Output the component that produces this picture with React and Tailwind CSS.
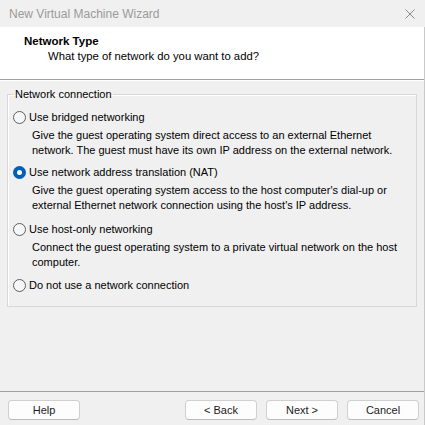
import React, { useState } from 'react'

const options = [
  {
    id: 'bridged',
    label: 'Use bridged networking',
    desc: ['Give the guest operating system direct access to an external Ethernet', 'network. The guest must have its own IP address on the external network.'],
    mt: 'mt-[8px]',
  },
  {
    id: 'nat',
    label: 'Use network address translation (NAT)',
    desc: ["Give the guest operating system access to the host computer's dial-up or", "external Ethernet network connection using the host's IP address."],
    mt: 'mt-[8px]',
  },
  {
    id: 'host',
    label: 'Use host-only networking',
    desc: ['Connect the guest operating system to a private virtual network on the host', 'computer.'],
    mt: 'mt-[10px]',
  },
  {
    id: 'none',
    label: 'Do not use a network connection',
    desc: [],
    mt: 'mt-[9px]',
  },
]

function Radio({ checked }) {
  if (checked) {
    return (
      <span className="w-[13px] h-[13px] rounded-full bg-[#005fb8] flex items-center justify-center shrink-0">
        <span className="w-[5px] h-[5px] rounded-full bg-white" />
      </span>
    )
  }
  return <span className="w-[13px] h-[13px] rounded-full border border-[#5f5f5f] bg-[#f7f7f7] shrink-0" />
}

function Button({ children }) {
  return (
    <button className="w-[72px] h-[20px] rounded-[4px] border border-[#d0d0d0] border-b-[#bcbcbc] bg-[#fdfdfd] text-[11px] leading-[18px] text-[#1b1b1b]">
      {children}
    </button>
  )
}

export default function App() {
  const [sel, setSel] = useState('nat')

  return (
    <div className="w-[425px] h-[425px] bg-[#f0f0f0] flex flex-col overflow-hidden text-black" style={{ fontFamily: '"Liberation Sans", Arial, sans-serif' }}>
      {/* title bar */}
      <div className="h-[27px] shrink-0 flex items-center justify-between pl-[9px] pr-[10px] bg-[#f0f0f0]">
        <span className="text-[12px] text-[#9a9a9a]">New Virtual Machine Wizard</span>
        <svg width="10" height="10" viewBox="0 0 10 10" className="text-[#8a8a8a]">
          <path d="M0.5 0.5 L9.5 9.5 M9.5 0.5 L0.5 9.5" stroke="currentColor" strokeWidth="1" fill="none" />
        </svg>
      </div>

      <div className="flex-1 flex flex-col border-r border-[#c9c9c9]">
        {/* header */}
        <div className="h-[53px] shrink-0 bg-white border-b border-[#a0a0a0] pt-[7px]">
          <div className="pl-[24px] text-[11.5px] font-bold leading-[15px]">Network Type</div>
          <div className="pl-[48px] text-[11.3px] leading-[15px]">What type of network do you want to add?</div>
        </div>
        <div className="h-px bg-white" />

        {/* body */}
        <div className="flex-1 px-[7px] pt-[6px]">
          <fieldset className="border border-[#d8d8d8] shadow-[inset_1px_1px_0_#ffffff] pl-[5px] pr-[4px] pb-[13px] m-0 min-w-0">
            <legend className="px-[1px] text-[11px] leading-[15px] ml-[1px]">Network connection</legend>
            {options.map(o => (
              <div key={o.id} className={o.mt} onClick={() => setSel(o.id)}>
                <div className="flex items-center h-[15px]">
                  <Radio checked={sel === o.id} />
                  <span className="ml-[3px] text-[11px] leading-[15px]">{o.label}</span>
                </div>
                {o.desc.length > 0 && (
                  <div className="mt-[3px] pl-[19px] text-[11px] leading-[14.5px]">
                    {o.desc.map(l => <div key={l}>{l}</div>)}
                  </div>
                )}
              </div>
            ))}
          </fieldset>
        </div>

        {/* footer */}
        <div className="h-[34px] shrink-0 border-t border-[#a0a0a0] flex items-start pt-[8px] pl-[8px] pr-[5px]">
          <Button>Help</Button>
          <div className="flex-1" />
          <div className="flex gap-[9px]">
            <Button>&lt; Back</Button>
            <Button>Next &gt;</Button>
            <Button>Cancel</Button>
          </div>
        </div>
      </div>
    </div>
  )
}
